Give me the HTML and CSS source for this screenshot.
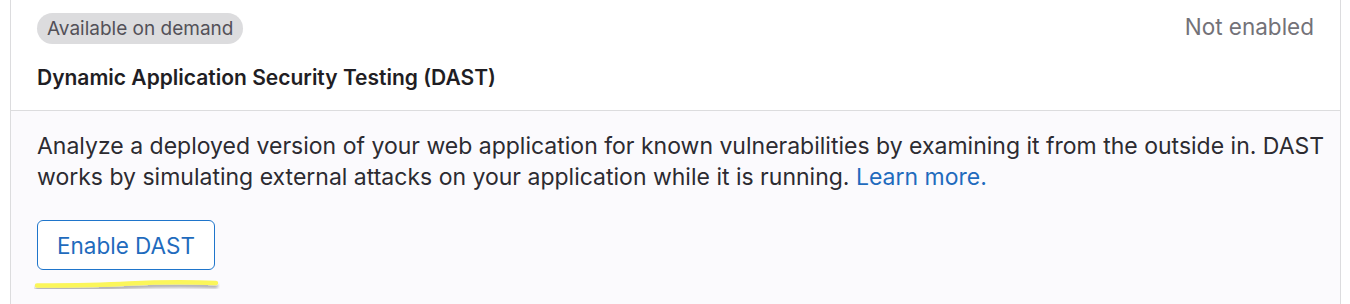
FILE: index.html
```html
<!DOCTYPE html>
<html lang="en">
<head>
    <meta charset="UTF-8">
    <meta name="viewport" content="width=device-width, initial-scale=1.0">
    <title>Security configuration</title>
    <link rel="stylesheet" href="styles.css">
</head>
<body>
    <div class="card">
        <div class="card-header">
            <div class="header-main">
                <span class="badge">Available on demand</span>
                <h3 class="title">Dynamic Application Security Testing (DAST)</h3>
            </div>
            <span class="status">Not enabled</span>
        </div>
        <div class="card-body">
            <p class="description">Analyze a deployed version of your web application for known vulnerabilities by examining it from the outside in. DAST works by simulating external attacks on your application while it is running. <a href="#" class="link">Learn more.</a></p>
            <button class="btn">Enable DAST</button>
            <svg class="scribble" width="186" height="14" viewBox="0 0 186 14">
                <defs>
                    <filter id="shadow" x="-5%" y="-50%" width="110%" height="250%">
                        <feDropShadow dx="0" dy="3" stdDeviation="1.5" flood-color="#000" flood-opacity="0.3"/>
                    </filter>
                </defs>
                <path d="M3 7.5 C40 7.5 70 7 95 5.5 C125 4 160 4 182 5" stroke="#fbf65a" stroke-width="4.5" stroke-linecap="round" fill="none" filter="url(#shadow)"/>
            </svg>
        </div>
    </div>
</body>
</html>
```

FILE: styles.css
```css
body {
    margin: 0;
    background-color: #fff;
    font-family: Inter, "Noto Sans", sans-serif;
    color: #333238;
}
.card {
    margin-left: 10px;
    width: 1329px;
    border: 1px solid #dcdcde;
    border-top: none;
    border-bottom: none;
    height: 304px;
}
.card-header {
    display: flex;
    justify-content: space-between;
    align-items: flex-start;
    padding: 13px 26px 17px 26px;
    border-bottom: 1px solid #dcdcde;
    background-color: #fff;
}
.header-main {
    display: flex;
    flex-direction: column;
    align-items: flex-start;
    gap: 18px;
}
.badge {
    display: inline-block;
    background-color: #dcdcde;
    color: #535158;
    font-size: 19px;
    line-height: 31px;
    padding: 0 10px;
    border-radius: 16px;
}
.title {
    margin: 0;
    font-size: 21px;
    font-weight: 600;
    line-height: 31px;
    color: #1f1e24;
}
.status {
    font-size: 22.5px;
    line-height: 31px;
    color: #737278;
    margin-top: -2px;
}
.card-body {
    background-color: #fbfafd;
    padding: 20px 12px 20px 26px;
    height: 200px;
}
.description {
    margin: 0 0 27px 0;
    font-size: 23px;
    line-height: 31px;
    color: #2c2b31;
}
.link {
    color: #1f6bbd;
    text-decoration: none;
}
.btn {
    display: block;
    height: 50px;
    padding: 0 19px;
    font-family: Inter, "Noto Sans", sans-serif;
    font-size: 22.5px;
    color: #1f6bbd;
    background-color: #fff;
    border: 1px solid #1f75cb;
    border-radius: 6px;
}
.scribble {
    display: block;
    margin: 8px 0 0 -3px;
}
```
